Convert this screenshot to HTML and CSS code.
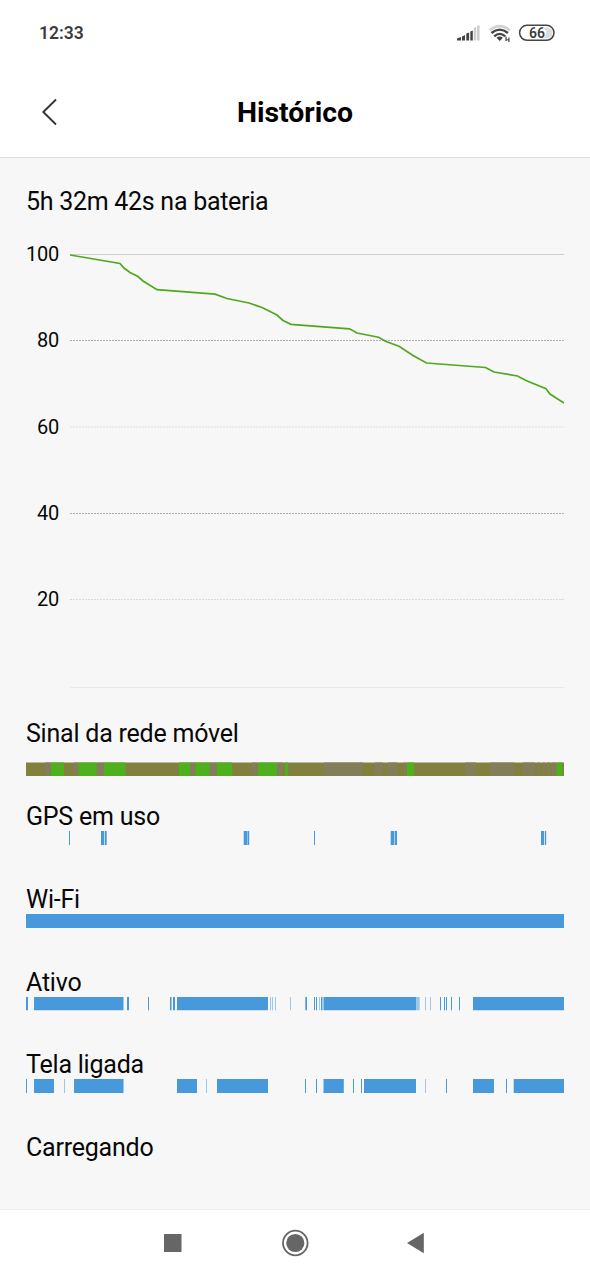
FILE: index.html
```html
<!DOCTYPE html>
<html lang="pt-BR">
<head>
<meta charset="utf-8">
<title>Histórico</title>
<link rel="stylesheet" href="styles.css">
</head>
<body>
<div class="status">
  <span class="clock">12:33</span>
  <svg class="status-icons" viewBox="450 20 110 28" width="110" height="28">
    <g fill="#444">
      <path d="M457 40.500v-2l4-1.500v3.500zM462 36.500l3-1.500v5.500h-3zM466.300 33.500l2.800-1v8h-2.800zM470.300 31.500l2.500-1v10h-2.500z"/>
      <path fill="#ccc" d="M473.800 28l2.400-1v13.500h-2.400zM477.100 26l2.400-1v15.500h-2.400z"/>
      <path d="M496.500 37.800q3.200-2.600 6.400 0l-3.200 3.200z"/>
      <path d="M505.400 36.500h1.200v4.500h-1.200zM508.300 37.500h1.200v4.500h-1.200zM506.500 39.600l1.800-.6v1l-1.800.6z"/>
    </g>
    <g fill="none" stroke-width="2.300">
      <path stroke="#d2d2d2" stroke-width="2.500" d="M489.700 30.300Q499.800 22 509.900 30.300"/>
      <path stroke="#444" d="M491.400 33Q499.700 26.200 508 33M494.200 36.300Q499.700 31.500 505.200 36.300"/>
    </g>
    <path fill="#ddd" d="M523 27.500h24a5.500 5.500 0 0 1 0 11h-24z"/>
    <rect x="519.600" y="25.300" width="34.400" height="15" rx="7.500" fill="none" stroke="#444" stroke-width="1.500"/>
    <rect x="521" y="26.700" width="25" height="12.200" rx="6" fill="#fff"/>
    <text class="battery" x="537" y="37.800" text-anchor="middle">66</text>
  </svg>
</div>
<header class="header">
  <svg class="back" viewBox="0 0 18 30" width="18" height="30"><path d="M17 1.500L4.300 14 17 26.500" fill="none" stroke="#333" stroke-width="1.900"/></svg>
  <h1 class="title">Histórico</h1>
</header>
<main class="content">
  <h2 class="label duration">5h 32m 42s na bateria</h2>
  <div class="chart">
    <div class="axis"><span>100</span><span>80</span><span>60</span><span>40</span><span>20</span></div>
    <svg viewBox="70 244 494 450" width="494" height="450">
      <g fill="none" stroke-width="1">
        <path stroke="#cfcfcf" d="M70 254.500h494"/>
        <path stroke="#b0b0b0" stroke-dasharray="2 1" d="M70 340.500h494M70 513.500h494"/>
        <path stroke="#e0e0e0" stroke-dasharray="2 1" d="M70 427h494"/>
        <path stroke="#d8d8d8" stroke-dasharray="2 1" d="M70 599.500h494"/>
        <path stroke="#e8e8e8" d="M70 687.500h494"/>
      </g>
      <polyline fill="none" stroke="#50a820" stroke-width="1.700" points="70,255 120,263.500 124,268 130,272.500 138,276.500 143,281 157,289.700 215,294.200 227,298.500 249,303 262,307.500 277,315 283,320.500 291,324.300 349.500,328.800 357,333 378.500,337.200 386,341.500 399,346.300 413,355.500 426.500,363 485.500,367.500 494,372 517.500,376 526,380.500 546,388.800 550,394 564,403"/>
    </svg>
  </div>
  <div class="tracks">
    <section class="signal">
      <h2 class="label">Sinal da rede móvel</h2>
      <svg class="bar" viewBox="26 0 538 14" width="538" height="14">
        <path fill="#82803f" d="M26 .5h538V14H26z"/>
        <path fill="#837e5a" d="M45 .5h6V14h-6zM74 .5h4V14h-4zM97 .5h7V14h-7zM190 .5h6V14h-6zM209 .5h8V14h-8zM252 .5h5V14h-5zM277 .5h6V14h-6zM324 .5h39V14h-39zM375 .5h8V14h-8zM388 .5h9V14h-9zM404 .5h2V14h-2zM465 .5h11V14h-11zM490 .5h24V14h-24zM523 .5h12V14h-12zM538 .5h2V14h-2zM543 .5h2V14h-2zM547 .5h3V14h-3zM552 .5h4V14h-4z"/>
        <path fill="#4db01c" d="M51 .5h13V14H51zM78.500 .5h18V14h-18zM104 .5h21.500V14H104zM179 .5h11V14h-11zM195.500 .5h14V14h-14zM217 .5h15.300V14H217zM258 .5h19V14h-19zM285 .5h3V14h-3zM407 .5h7V14h-7zM556.500 .5h6V14h-6z"/>
      </svg>
    </section>
    <section>
      <h2 class="label">GPS em uso</h2>
      <svg class="bar" viewBox="26 0 538 14" width="538" height="14"><path fill="#4898dc" d="M69 0h1v14h-1zM101 0h3v14h-3zM104.700 0h2v14h-2zM243.700 0h3.600v14h-3.600zM247.700 0h1.500v14h-1.500zM314 0h1v14h-1zM390.700 0h3.500v14h-3.500zM394.800 0h2.200v14h-2.200zM541 0h3v14h-3zM544.800 0h1.400v14h-1.400z"/></svg>
    </section>
    <section>
      <h2 class="label">Wi-Fi</h2>
      <svg class="bar" viewBox="26 0 538 14" width="538" height="14"><path fill="#4898dc" d="M26 0h538v14H26z"/></svg>
    </section>
    <section>
      <h2 class="label">Ativo</h2>
      <svg class="bar" viewBox="26 0 538 14" width="538" height="14">
        <path fill="#4898dc" d="M26 0h2v13.300h-2zM34 0h89.500v13.300H34zM127 0h2v13.300h-2zM148 0h1v13.300h-1zM170 0h1.500v13.300H170zM173 0h2v13.300h-2zM177 0h91v13.300h-91zM305.300 0h1.700v13.300h-1.700zM314 0h1v13.300h-1zM316 0h1v13.300h-1zM321 0h1.500v13.300H321zM323.500 0h93v13.300h-93zM440 0h1v13.300h-1zM444 0h1v13.300h-1zM446 0h1v13.300h-1zM451 0h1v13.300h-1zM459 0h1v13.300h-1zM473 0h91v13.300h-91z"/>
        <path fill="#9cc6eb" d="M270 0h1v13.300h-1zM272 0h1v13.300h-1zM275 0h1v13.300h-1zM290 0h1v13.300h-1zM319 0h1v13.300h-1zM417 0h2.700v13.300H417zM425 0h1v13.300h-1zM430 0h1v13.300h-1z"/>
      </svg>
    </section>
    <section>
      <h2 class="label">Tela ligada</h2>
      <svg class="bar" viewBox="26 0 538 14" width="538" height="14">
        <path fill="#4898dc" d="M26 0h1v14h-1zM34 0h20v14H34zM74 0h49.500v14H74zM177 0h20v14h-20zM217 0h51v14h-51zM305 0h1v14h-1zM316 0h1v14h-1zM323.500 0h20.300v14h-20.300zM353 0h1v14h-1zM361 0h1v14h-1zM364 0h52v14h-52zM446 0h1v14h-1zM473 0h21v14h-21zM506 0h1v14h-1zM513.700 0H564v14h-50.300z"/>
        <path fill="#9cc6eb" d="M64 0h1v14h-1zM206 0h1v14h-1zM425 0h1v14h-1z"/>
      </svg>
    </section>
    <section>
      <h2 class="label">Carregando</h2>
    </section>
  </div>
</main>
<nav class="nav">
  <svg viewBox="0 1210 590 70" width="590" height="70">
    <g fill="#666">
      <rect x="164" y="1234" width="17.500" height="18" rx=".6"/>
      <circle cx="295.300" cy="1243" r="9.100"/>
      <circle cx="295.300" cy="1243" r="12.300" fill="none" stroke="#666" stroke-width="1.800"/>
      <path d="M407 1243l16.800-10.200v20.400z"/>
    </g>
  </svg>
</nav>
</body>
</html>
```
FILE: styles.css
```css
* { box-sizing: border-box; }
body {
  margin: 0;
  width: 590px;
  height: 1280px;
  display: flex;
  flex-direction: column;
  overflow: hidden;
  background: #fff;
  color: #080808;
  font-family: Roboto, sans-serif;
}
svg { display: block; }
h1, h2 { margin: 0; }
.status {
  height: 67px;
  padding: 20px 30px 0 39px;
  display: flex;
  justify-content: space-between;
  align-items: flex-start;
}
.clock {
  font-size: 17.5px;
  line-height: 27px;
  font-weight: 600;
  color: #3c3c3c;
}
.battery {
  font-size: 14px;
  font-weight: 600;
  fill: #3c3c3c;
}
.header {
  height: 91px;
  padding: 1px 39px 0;
  display: grid;
  grid-template-columns: 18px 1fr 18px;
  align-items: center;
  border-bottom: 1px solid #dfdfdf;
}
.title {
  padding-top: 1px;
  font-size: 28.4px;
  line-height: 36px;
  font-weight: 700;
  color: #000;
  text-align: center;
}
.content {
  flex: 1;
  padding: 30px 26px 0;
  background: #f7f7f7;
}
.label {
  font-size: 25px;
  line-height: 28px;
  font-weight: 400;
  letter-spacing: -0.22px;
  white-space: nowrap;
}
.duration {
  margin-bottom: 28px;
  letter-spacing: -0.28px;
}
.chart {
  display: grid;
  grid-template-columns: 33px 494px;
  column-gap: 11px;
}
.axis {
  display: grid;
  grid-template-rows: repeat(5, 86.3px);
  padding-right: 0.8px;
  font-size: 20px;
  line-height: 20px;
  letter-spacing: -0.3px;
  text-align: right;
}
.tracks {
  margin-top: 26px;
  display: grid;
  grid-template-rows: 83px 83px 83px 82px 83px 28px;
}
.signal .bar { margin-top: 14px; }
.nav {
  height: 71px;
  border-top: 1px solid #ececec;
}
```
